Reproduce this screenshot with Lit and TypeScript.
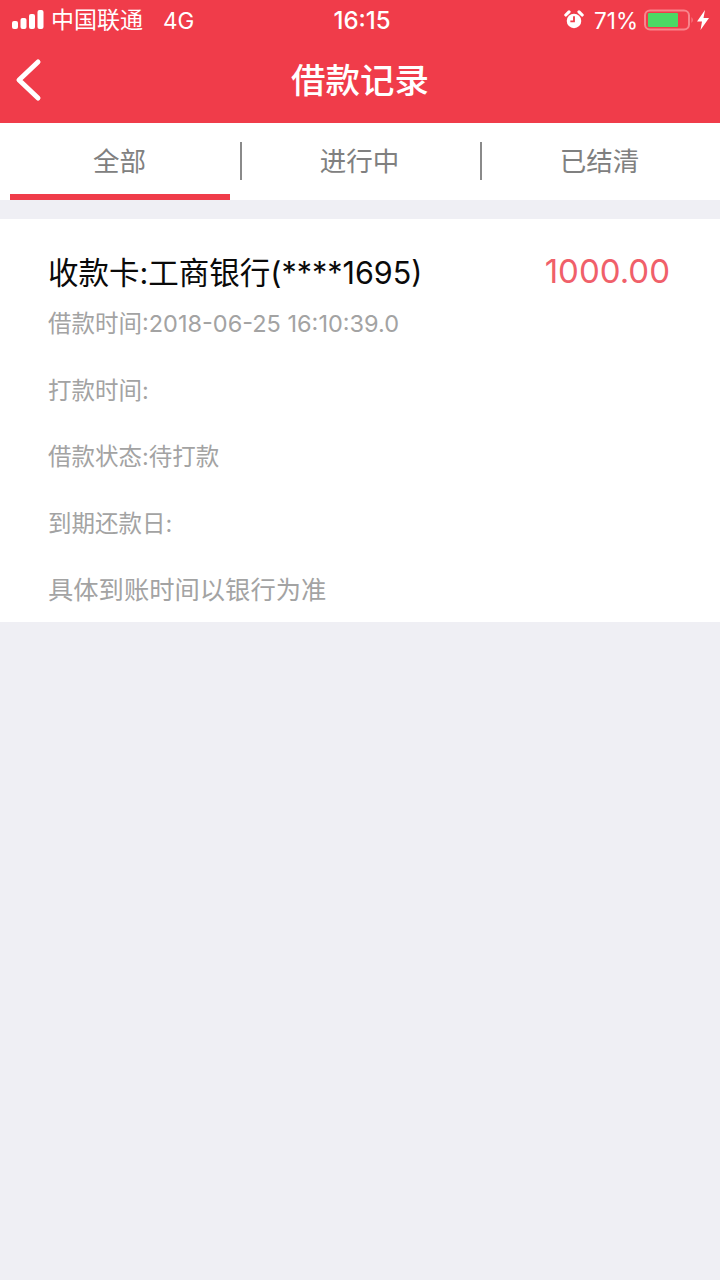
import { LitElement, html, css } from "lit";
import { customElement } from "lit/decorators.js";

@customElement("app-root")
export class AppRoot extends LitElement {
  static styles = css`
    :host {
      display: block;
      width: 720px;
      height: 1280px;
      background: #efeff4;
      font-family: "Inter", "Noto Sans CJK SC", sans-serif;
      overflow: hidden;
    }
    .head {
      background: #f03c4a;
      height: 123px;
      color: #fff;
      display: flex;
      flex-direction: column;
    }
    .status {
      height: 40px;
      display: flex;
      align-items: center;
      position: relative;
      font-size: 22px;
      color: #fff;
      padding: 0 11px 0 12px;
    }
    .signal { display: block; margin-right: 7px; }
    .carrier { font-size: 23px; line-height: 40px; }
    .net { margin-left: 20px; font-size: 22.500px; }
    .time {
      position: absolute;
      left: 0;
      right: 0;
      text-align: center;
      font-size: 24px;
      font-weight: 500;
      padding-left: 4px;
    }
    .right { margin-left: auto; display: flex; align-items: center; }
    .pct { margin: 0 6px 0 10px; font-size: 22.500px; }
    .nav {
      flex: 1;
      display: flex;
      align-items: center;
      position: relative;
      justify-content: center;
      font-size: 34.500px;
      font-weight: 500;
      padding-bottom: 8px;
    }
    .back { position: absolute; left: 15px; top: 18px; }
    .tabs {
      height: 77px;
      background: #fff;
      display: grid;
      grid-template-columns: repeat(3, 240px);
    }
    .tab {
      position: relative;
      display: flex;
      align-items: center;
      justify-content: center;
      font-size: 26.500px;
      color: #808080;
      padding: 0 1px 5px 0;
    }
    .tab.sep::after {
      content: "";
      position: absolute;
      right: -2px;
      top: 19px;
      width: 2px;
      height: 38px;
      background: #8a8a8a;
    }
    .tab.active::before {
      content: "";
      position: absolute;
      left: 10px;
      right: 10px;
      bottom: 0;
      height: 6px;
      background: #f03c4a;
    }
    .card {
      margin-top: 19px;
      background: #fff;
      height: 403px;
      padding: 0 50px 0 48px;
      box-sizing: border-box;
      display: flex;
      flex-direction: column;
    }
    .top {
      display: flex;
      justify-content: space-between;
      align-items: center;
      padding-top: 34px;
      height: 36px;
      margin-bottom: 21px;
    }
    .title { font-size: 30.500px; color: #0a0a0a; }
    .amount { font-size: 33px; color: #f0606a; }
    .line {
      font-size: 23.500px;
      color: #a3a3a3;
      height: 66.500px;
      line-height: 28px;
      flex: none;
    }
    .line.big { font-size: 25.300px; }
  `;

  render() {
    return html`
      <div class="head">
        <div class="status">
          <svg class="signal" width="32" height="20" viewBox="0 0 32 20" fill="#fff">
            <rect x="0" y="11" width="6" height="8" rx="2"/>
            <rect x="8.5" y="8" width="6" height="11" rx="2"/>
            <rect x="17" y="4" width="6" height="15" rx="2"/>
            <rect x="25.5" y="0" width="6" height="19" rx="2"/>
          </svg>
          <span class="carrier">中国联通</span>
          <span class="net">4G</span>
          <span class="time">16:15</span>
          <div class="right">
            <svg width="20" height="20" viewBox="0 0 22 22">
              <circle cx="11" cy="12" r="8" fill="#fff"/>
              <path d="M11 7v5.5H7" fill="none" stroke="#f03c4a" stroke-width="2"/>
              <path d="M2 5.500 L5.500 2 M20 5.500 L16.500 2" stroke="#fff" stroke-width="3.500" stroke-linecap="round"/>
            </svg>
            <span class="pct">71%</span>
            <svg width="50" height="22" viewBox="0 0 50 22">
              <rect x="1" y="1.500" width="44" height="19" rx="5" fill="none" stroke="#f8848c" stroke-width="2"/>
              <rect x="4" y="4" width="30" height="14" rx="1" fill="#4cd964"/>
              <path d="M47.500 8 q2.500 3 0 6z" fill="#f8848c"/>
            </svg>
            <svg style="margin-left:3px" width="12" height="20" viewBox="0 0 12 20" fill="#fff">
              <path d="M8 0 L0 11.500 H5 L3.500 20 L12 8 H6.500z"/>
            </svg>
          </div>
        </div>
        <div class="nav">
          <svg class="back" width="28" height="44" viewBox="0 0 28 44">
            <path d="M23 4 L4 22 L23 40" fill="none" stroke="#fff" stroke-width="5" stroke-linecap="round" stroke-linejoin="round"/>
          </svg>
          借款记录
        </div>
      </div>
      <div class="tabs">
        <div class="tab active sep">全部</div>
        <div class="tab sep">进行中</div>
        <div class="tab">已结清</div>
      </div>
      <div class="card">
        <div class="top">
          <span class="title">收款卡:工商银行(****1695)</span>
          <span class="amount">1000.00</span>
        </div>
        <div class="line">借款时间:2018-06-25 16:10:39.0</div>
        <div class="line">打款时间:</div>
        <div class="line">借款状态:待打款</div>
        <div class="line">到期还款日:</div>
        <div class="line big">具体到账时间以银行为准</div>
      </div>
    `;
  }
}
